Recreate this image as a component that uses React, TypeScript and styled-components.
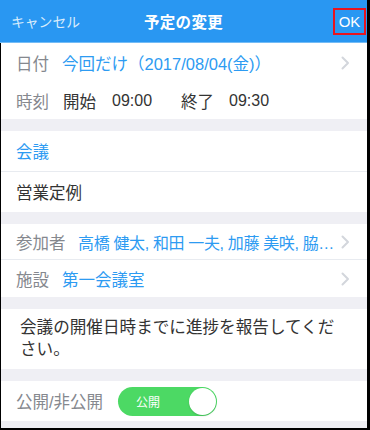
import React from "react";
import styled, { createGlobalStyle } from "styled-components";

const Global = createGlobalStyle`
  html, body { margin: 0; padding: 0; background: #000; }
  body { font-family: "Liberation Sans", "Noto Sans CJK JP", sans-serif; }
`;

const Frame = styled.div`
  width: 367px;
  height: 428px;
  background: #efeff4;
  overflow: hidden;
  display: flex;
  flex-direction: column;
`;

const Header = styled.header`
  height: 42px;
  background: #2997f2;
  border-bottom: 1px solid #74bcf6;
  display: grid;
  grid-template-columns: 1fr auto 1fr;
  align-items: center;
  color: #fff;
  flex-shrink: 0;
`;

const Cancel = styled.span`
  font-size: 13.8px;
  color: #d9ecfc;
  padding-left: 11px;
`;

const Title = styled.span`
  font-size: 15.5px;
  font-weight: bold;
  letter-spacing: 0.3px;
`;

const OkWrap = styled.div`
  display: flex;
  justify-content: flex-end;
  padding-right: 1px;
`;

const Ok = styled.span`
  box-sizing: border-box;
  width: 33px;
  height: 27px;
  border: 2px solid #e8141e;
  display: flex;
  align-items: center;
  justify-content: center;
  font-size: 15px;
  color: #fff;
`;

const Body = styled.div`
  flex: 1;
  border-left: 1px solid #000;
  display: flex;
  flex-direction: column;
`;

const Section = styled.section<{ $gapAfter?: number }>`
  background: #fff;
  margin-bottom: ${(p) => p.$gapAfter ?? 12}px;
  display: flex;
  flex-direction: column;
`;

const Row = styled.div<{ $h: number; $divider?: boolean }>`
  height: ${(p) => p.$h}px;
  display: flex;
  align-items: center;
  padding: 0 17px 0 15px;
  font-size: 16.5px;
  border-top: ${(p) => (p.$divider ? "1px solid #e8ebf0" : "none")};
`;

const Label = styled.span<{ $w: number }>`
  color: #85888e;
  width: ${(p) => p.$w}px;
  flex-shrink: 0;
`;

const Value = styled.span<{ $tone?: "blue" | "dark"; $tight?: boolean }>`
  color: ${(p) => (p.$tone === "dark" ? "#333" : "#2d9bf2")};
  flex: 1;
  min-width: 0;
  white-space: nowrap;
  font-size: ${(p) => (p.$tight ? "16px" : "inherit")};
  letter-spacing: ${(p) => (p.$tight ? "-0.35px" : "normal")};
`;

const TimeGroup = styled.span`
  color: #333;
  display: flex;
  align-items: center;
`;

const TimeLabel = styled.span<{ $w: number }>`
  width: ${(p) => p.$w}px;
`;

const TimeVal = styled.span<{ $w?: number }>`
  width: ${(p) => (p.$w ? `${p.$w}px` : "auto")};
  font-size: 16px;
`;

const Chevron = () => (
  <svg width="9" height="14" viewBox="0 0 9 14" style={{ flexShrink: 0, marginLeft: 6 }}>
    <path d="M1.5 1.5 L7 7 L1.5 12.5" fill="none" stroke="#d3d6dc" strokeWidth="2" strokeLinecap="round" strokeLinejoin="round" />
  </svg>
);

const Note = styled.div`
  height: 60px;
  box-sizing: border-box;
  padding: 8px 20px 0 19px;
  font-size: 16.6px;
  line-height: 22px;
  color: #333;
`;

const Toggle = styled.div`
  box-sizing: border-box;
  width: 99px;
  height: 29px;
  border-radius: 15px;
  background: #4cd964;
  display: flex;
  align-items: center;
  justify-content: space-between;
  padding: 0 1px 0 18px;
`;

const ToggleText = styled.span`
  color: #fff;
  font-size: 12px;
`;

const Knob = styled.span`
  width: 27px;
  height: 27px;
  border-radius: 50%;
  background: #fff;
  box-shadow: 0 1px 2px rgba(0, 0, 0, 0.15);
`;

export default function App() {
  return (
    <>
      <Global />
      <Frame>
        <Header>
          <Cancel>キャンセル</Cancel>
          <Title>予定の変更</Title>
          <OkWrap>
            <Ok>OK</Ok>
          </OkWrap>
        </Header>
        <Body>
          <Section>
            <Row $h={40}>
              <Label $w={46}>日付</Label>
              <Value>今回だけ（2017/08/04(金)）</Value>
              <Chevron />
            </Row>
            <Row $h={36}>
              <Label $w={47}>時刻</Label>
              <TimeGroup>
                <TimeLabel $w={49}>開始</TimeLabel>
                <TimeVal $w={69}>09:00</TimeVal>
                <TimeLabel $w={48}>終了</TimeLabel>
                <TimeVal>09:30</TimeVal>
              </TimeGroup>
            </Row>
          </Section>
          <Section>
            <Row $h={40}>
              <Value>会議</Value>
            </Row>
            <Row $h={40} $divider>
              <Value $tone="dark">営業定例</Value>
            </Row>
          </Section>
          <Section>
            <Row $h={35}>
              <Label $w={62}>参加者</Label>
              <Value $tight>高橋 健太, 和田 一夫, 加藤 美咲, 脇…</Value>
              <Chevron />
            </Row>
            <Row $h={37} $divider>
              <Label $w={46}>施設</Label>
              <Value>第一会議室</Value>
              <Chevron />
            </Row>
          </Section>
          <Section>
            <Note>会議の開催日時までに進捗を報告してください。</Note>
          </Section>
          <Section $gapAfter={0}>
            <Row $h={40}>
              <Label $w={102}>公開/非公開</Label>
              <Toggle>
                <ToggleText>公開</ToggleText>
                <Knob />
              </Toggle>
            </Row>
          </Section>
        </Body>
      </Frame>
    </>
  );
}
